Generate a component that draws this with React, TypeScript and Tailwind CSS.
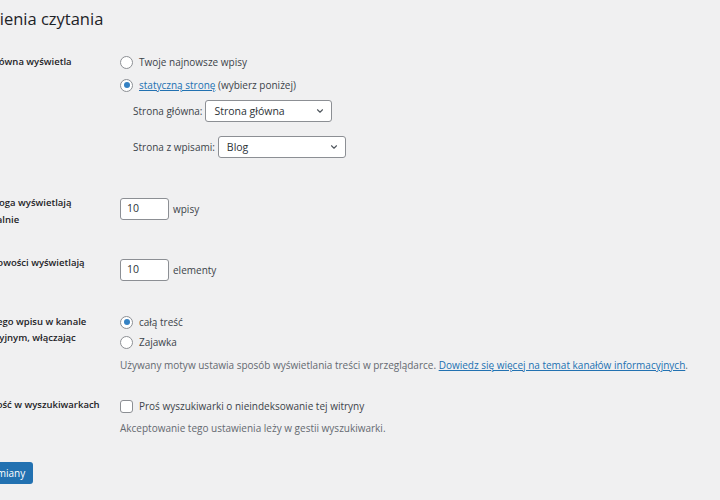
import React from "react";

const font = { fontFamily: '"Open Sans", "Noto Sans", sans-serif' };

function Radio({ checked }: { checked?: boolean }) {
  return (
    <span className="flex h-[13px] w-[13px] shrink-0 items-center justify-center rounded-full border border-[#8c8f94] bg-white">
      {checked && <span className="h-[6px] w-[6px] rounded-full bg-[#3582c4]" />}
    </span>
  );
}

function Chevron() {
  return (
    <svg width="10" height="10" viewBox="0 0 20 20" className="shrink-0">
      <path d="M5 7.5 L10 12.5 L15 7.5" fill="none" stroke="#50575e" strokeWidth="2.2" strokeLinecap="round" strokeLinejoin="round" />
    </svg>
  );
}

function Select({ value, width }: { value: string; width: string }) {
  return (
    <div className={`flex h-[22px] items-center justify-between rounded-[3px] border border-[#8c8f94] bg-white pl-[8px] pr-[6px] text-[10.5px] text-[#2c3338] ${width}`}>
      <span>{value}</span>
      <Chevron />
    </div>
  );
}

function NumInput({ value }: { value: string }) {
  return (
    <div className="flex h-[22px] w-[49px] items-center rounded-[3px] border border-[#8c8f94] bg-white pl-[6px] text-[10.5px] text-[#2c3338]">
      {value}
    </div>
  );
}

const labelCls = "w-[162px] shrink-0 pr-[12px] text-[9.5px] font-semibold text-[#1d2327]";

export default function App() {
  return (
    <div className="h-[500px] w-[720px] overflow-hidden bg-[#f0f0f1] text-[#3c434a]" style={font}>
      <div className="ml-[-42px] w-[800px]">
        <h1 className="ml-[-6px] h-[40px] pt-[7px] text-[16.5px] font-normal leading-[24px] text-[#1d2327]">
          Ustawienia czytania
        </h1>

        {/* Row 1 */}
        <div className="flex h-[130px] items-start">
          <div className={`${labelCls} pt-[14px] leading-[16px]`}>Strona główna wyświetla</div>
          <div className="flex flex-col pt-[14px] text-[10px] leading-[16px]">
            <div className="flex items-center gap-[6px]">
              <Radio />
              <span>Twoje najnowsze wpisy</span>
            </div>
            <div className="mt-[7px] flex items-center gap-[6px]">
              <Radio checked />
              <span>
                <span className="text-[#2271b1] underline">statyczną stronę</span> (wybierz poniżej)
              </span>
            </div>
            <div className="ml-[13px] mt-[7px] flex items-center gap-[3px]">
              <span>Strona główna:</span>
              <Select value="Strona główna" width="w-[127px]" />
            </div>
            <div className="ml-[13px] mt-[14px] flex items-center gap-[3px]">
              <span>Strona z wpisami:</span>
              <Select value="Blog" width="w-[128px]" />
            </div>
          </div>
        </div>

        {/* Row 2 */}
        <div className="flex h-[70px] items-start">
          <div className={`${labelCls} pt-[24px] leading-[17px]`}>Strony bloga wyświetlają maksymalnie</div>
          <div className="flex items-center gap-[4px] pt-[28px] text-[10px]">
            <NumInput value="10" />
            <span>wpisy</span>
          </div>
        </div>

        {/* Row 3 */}
        <div className="flex h-[60px] items-start">
          <div className={`${labelCls} pt-[15px] leading-[16px]`}>Kanały nowości wyświetlają</div>
          <div className="flex items-center gap-[4px] pt-[19px] text-[10px]">
            <NumInput value="10" />
            <span>elementy</span>
          </div>
        </div>

        {/* Row 4 */}
        <div className="flex h-[80px] items-start">
          <div className={`${labelCls} pt-[14px] leading-[16px]`}>Dla każdego wpisu w kanale informacyjnym, włączając</div>
          <div className="flex flex-col pt-[14px] text-[10px] leading-[16px]">
            <div className="flex items-center gap-[6px]">
              <Radio checked />
              <span>całą treść</span>
            </div>
            <div className="mt-[4px] flex items-center gap-[6px]">
              <Radio />
              <span>Zajawka</span>
            </div>
            <p className="mt-[7px] whitespace-nowrap text-[#646970]">
              Używany motyw ustawia sposób wyświetlania treści w przeglądarce.{" "}
              <span className="text-[#2271b1] underline">Dowiedz się więcej na temat kanałów informacyjnych</span>.
            </p>
          </div>
        </div>

        {/* Row 5 */}
        <div className="flex h-[82px] items-start">
          <div className={`${labelCls} pt-[17px] leading-[16px]`}>Widoczność w wyszukiwarkach</div>
          <div className="flex flex-col pt-[18px] text-[10px] leading-[16px]">
            <div className="flex items-center gap-[6px]">
              <span className="h-[13px] w-[13px] shrink-0 rounded-[3px] border border-[#8c8f94] bg-white" />
              <span>Proś wyszukiwarki o nieindeksowanie tej witryny</span>
            </div>
            <p className="mt-[6px] text-[#646970]">Akceptowanie tego ustawienia leży w gestii wyszukiwarki.</p>
          </div>
        </div>

        <button className="ml-[-6px] flex h-[22px] items-center rounded-[3px] bg-[#2271b1] px-[8px] text-[10px] text-white">
          Zapisz zmiany
        </button>
      </div>
    </div>
  );
}
